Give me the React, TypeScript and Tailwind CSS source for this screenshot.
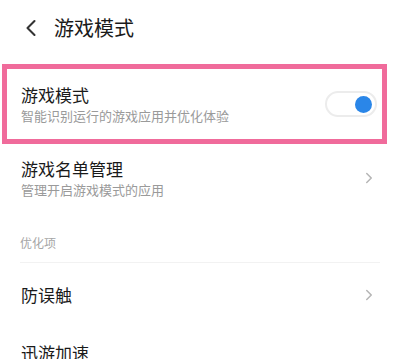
import { ChevronLeft, ChevronRight } from 'lucide-react';

const font = { fontFamily: '"Noto Sans CJK SC", "Noto Sans", sans-serif' };

function Toggle() {
  return (
    <div className="flex h-[26px] w-[52px] items-center justify-end rounded-full border-2 border-[#ececec] bg-white pr-[3px]">
      <div className="h-[17px] w-[17px] rounded-full bg-[#2a86e8]" />
    </div>
  );
}

export default function App() {
  return (
    <div className="h-[359px] w-[400px] overflow-hidden bg-white text-[#1a1a1a]" style={font}>
      <div className="flex h-[56px] items-center pl-[17px]">
        <ChevronLeft className="h-[28px] w-[28px] text-[#333]" strokeWidth={1.8} />
        <span className="ml-[9px] text-[20px] leading-none">游戏模式</span>
      </div>

      <div className="mx-[2px] mt-[8px] mr-[13px] flex h-[80px] items-center justify-between border-[5px] border-[#f06b9b] pl-[14px] pr-[5px]">
        <div className="flex flex-col">
          <span className="text-[17px] leading-[22px]">游戏模式</span>
          <span className="mt-[1px] text-[13px] leading-[18px] text-[#9a9a9a]">智能识别运行的游戏应用并优化体验</span>
        </div>
        <Toggle />
      </div>

      <div className="flex h-[68px] items-center justify-between pl-[21px] pr-[22px]">
        <div className="flex flex-col">
          <span className="text-[17px] leading-[22px]">游戏名单管理</span>
          <span className="mt-[1px] text-[13px] leading-[18px] text-[#9a9a9a]">管理开启游戏模式的应用</span>
        </div>
        <ChevronRight className="h-[18px] w-[18px] text-[#b5b5b5]" strokeWidth={2} />
      </div>

      <div className="mx-[20px] mt-[23px] border-b border-[#f2f2f2] pb-[11px] text-[12px] leading-[16px] text-[#a6a6a6]">
        优化项
      </div>

      <div className="flex h-[64px] items-center justify-between pl-[21px] pr-[22px]">
        <span className="text-[17px] leading-[22px]">防误触</span>
        <ChevronRight className="h-[18px] w-[18px] text-[#b5b5b5]" strokeWidth={2} />
      </div>

      <div className="pl-[21px] pt-[14px]">
        <span className="text-[17px] leading-[22px]">迅游加速</span>
      </div>
    </div>
  );
}
